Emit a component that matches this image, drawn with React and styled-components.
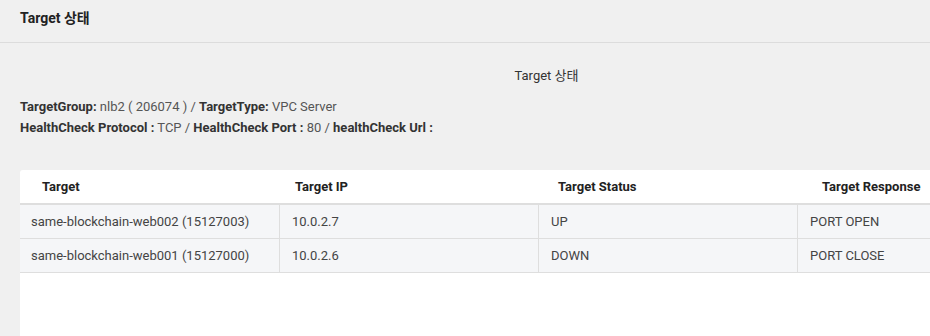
import React from "react";
import styled, { createGlobalStyle } from "styled-components";

const Global = createGlobalStyle`
  html, body { margin: 0; padding: 0; background: #f0f0f0; overflow: hidden; }
  body { font-family: Roboto, "Noto Sans CJK KR", sans-serif; }
`;

const Page = styled.div`
  width: 930px;
  height: 336px;
  overflow: hidden;
  background: #f0f0f0;
`;

const TopBar = styled.div`
  height: 43px;
  border-bottom: 1px solid #dcdcdc;
  display: flex;
  align-items: center;
  padding: 0 20px 8px;
  box-sizing: border-box;
`;

const PageTitle = styled.h1`
  margin: 0;
  font-size: 14px;
  font-weight: 700;
  color: #222;
  font-family: "Segoe UI", Roboto, "Noto Sans CJK KR", sans-serif;
`;

const Content = styled.div`
  width: 1053px;
  padding: 23px 0 0 20px;
`;

const Caption = styled.div`
  text-align: center;
  font-size: 13px;
  color: #333;
  height: 20px;
  line-height: 20px;
`;

const Info = styled.div`
  margin-top: 10px;
  font-size: 13px;
  line-height: 21px;
  color: #555;
`;

const Label = styled.b`
  color: #333;
  font-weight: 700;
`;

const Card = styled.div`
  margin-top: 32px;
  background: #fff;
  border-radius: 3px 0 0 0;
  height: 200px;
  width: 1053px;
`;

const Grid = styled.div`
  display: grid;
  grid-template-columns: 259px 259px 259px 259px;
`;

const HeadRow = styled(Grid)`
  height: 33px;
  border-bottom: 2px solid #dedede;
`;

const HeadCell = styled.div`
  display: flex;
  align-items: center;
  padding-left: ${(p) => p.$pl}px;
  font-size: 13px;
  font-weight: 700;
  color: #222;
`;

const BodyRow = styled(Grid)`
  height: 33px;
  background: #f5f6f8;
  border-bottom: 1px solid #dedede;
`;

const Cell = styled.div`
  display: flex;
  align-items: center;
  padding-left: ${(p) => (p.$first ? 11 : 12)}px;
  font-size: 13px;
  color: #444;
  border-left: ${(p) => (p.$first ? "none" : "1px solid #dedede")};
`;

const heads = [
  ["Target", 22],
  ["Target IP", 16],
  ["Target Status", 20],
  ["Target Response", 25],
];

const rows = [
  ["same-blockchain-web002 (15127003)", "10.0.2.7", "UP", "PORT OPEN"],
  ["same-blockchain-web001 (15127000)", "10.0.2.6", "DOWN", "PORT CLOSE"],
];

export default function App() {
  return (
    <Page>
      <Global />
      <TopBar>
        <PageTitle>Target 상태</PageTitle>
      </TopBar>
      <Content>
        <Caption>Target 상태</Caption>
        <Info>
          <div>
            <Label>TargetGroup:</Label> nlb2 ( 206074 ) / <Label>TargetType:</Label> VPC Server
          </div>
          <div>
            <Label>HealthCheck Protocol :</Label> TCP / <Label>HealthCheck Port :</Label> 80 /{" "}
            <Label>healthCheck Url :</Label>
          </div>
        </Info>
        <Card>
          <HeadRow>
            {heads.map(([h, pl]) => (
              <HeadCell key={h} $pl={pl}>
                {h}
              </HeadCell>
            ))}
          </HeadRow>
          {rows.map((r) => (
            <BodyRow key={r[0]}>
              {r.map((c, i) => (
                <Cell key={i} $first={i === 0}>
                  {c}
                </Cell>
              ))}
            </BodyRow>
          ))}
        </Card>
      </Content>
    </Page>
  );
}
